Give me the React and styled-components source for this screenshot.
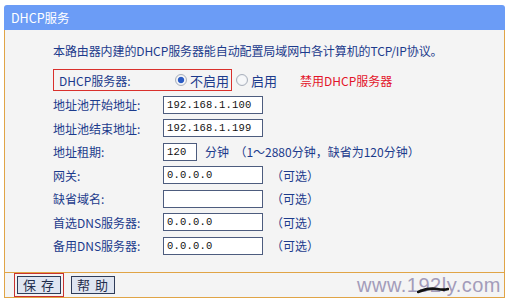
import React from 'react'
import styled, { createGlobalStyle } from 'styled-components'

const GlobalStyle = createGlobalStyle`
    body {
        margin: 0;
        background: #ffffff;
        font-family: "Noto Sans CJK SC", "Liberation Sans", sans-serif;
        font-size: 12px;
    }
`

const rows = [
    { label: '地址池开始地址:', value: '192.168.1.100' },
    { label: '地址池结束地址:', value: '192.168.1.199' },
    { label: '地址租期:', value: '120', small: true, note: '分钟  （1～2880分钟，缺省为120分钟）' },
    { label: '网关:', value: '0.0.0.0', note: '（可选）' },
    { label: '缺省域名:', value: '', note: '（可选）' },
    { label: '首选DNS服务器:', value: '0.0.0.0', note: '（可选）' },
    { label: '备用DNS服务器:', value: '0.0.0.0', note: '（可选）' },
]

const App = () => {
    return (
        <>
            <GlobalStyle />
            <Panel>
                <Header>DHCP服务</Header>
                <Body>
                    <Intro>本路由器内建的DHCP服务器能自动配置局域网中各计算机的TCP/IP协议。</Intro>
                    <SwitchRow>
                        <RedBox>
                            <Label $width={116}>DHCP服务器:</Label>
                            <Radio $checked />
                            <OptionText>不启用</OptionText>
                        </RedBox>
                        <Radio />
                        <OptionText>启用</OptionText>
                        <Warning>禁用DHCP服务器</Warning>
                    </SwitchRow>
                    {rows.map((row) => (
                        <Row key={row.label}>
                            <Label $width={110}>{row.label}</Label>
                            <Field $small={row.small}>{row.value}</Field>
                            {row.note && <Note>{row.note}</Note>}
                        </Row>
                    ))}
                </Body>
                <Footer>
                    <Focus>
                        <Button>保存</Button>
                    </Focus>
                    <Button>帮助</Button>
                    <Watermark>
                        www.192ly.com
                        <Scribble viewBox="0 0 32 8">
                            <path d="M1 6 C 8 3, 14 2, 20 3 S 28 4, 31 3" stroke="#111" strokeWidth="2.6" fill="none" strokeLinecap="round" />
                        </Scribble>
                    </Watermark>
                </Footer>
            </Panel>
        </>
    )
}

export default App

const Panel = styled.div`
    margin: 5px 0 0 4px;
    width: 501px;
`

const Header = styled.div`
    height: 25px;
    line-height: 25px;
    padding-left: 7px;
    background: #6b9cf6;
    color: #ffffff;
    font-size: 12.5px;
    border-radius: 3px 3px 0 0;
`

const Body = styled.div`
    background: #f4f4f4;
    border-left: 1px solid #e0a446;
    border-right: 1px solid #e0a446;
    padding: 12px 0 14px 48px;
    color: #1c3b8c;
`

const Intro = styled.div`
    line-height: 18px;
    margin-bottom: 9px;
    letter-spacing: -0.1px;
`

const SwitchRow = styled.div`
    display: flex;
    align-items: center;
    height: 22px;
    margin-bottom: 2px;
`

const RedBox = styled.div`
    display: flex;
    align-items: center;
    box-sizing: border-box;
    height: 22px;
    width: 179px;
    padding-left: 5px;
    border: 1px solid #d9302c;
`

const Label = styled.div`
    width: ${(p) => p.$width}px;
    flex-shrink: 0;
    white-space: nowrap;
`

const Radio = styled.span`
    box-sizing: border-box;
    width: 12px;
    height: 12px;
    border-radius: 50%;
    border: 1px solid #a9b0bc;
    background: radial-gradient(circle, ${(p) => (p.$checked ? '#2a5bc4 0 2.6px, #6f8fd4 3.2px,' : '')} #f6f7f9 3.6px, #d9dde4 100%);
    flex-shrink: 0;
    margin-left: ${(p) => (p.$checked ? '0' : '4px')};
`

const OptionText = styled.span`
    margin-left: 3px;
    font-size: 13px;
`

const Warning = styled.span`
    margin-left: 23px;
    color: #e3142a;
`

const Row = styled.div`
    display: flex;
    align-items: center;
    height: 23.5px;
`

const Field = styled.div`
    box-sizing: border-box;
    width: ${(p) => (p.$small ? 34 : 100)}px;
    height: 18px;
    line-height: 16px;
    padding-left: 3px;
    border: 1px solid #4d5c7e;
    background: #ffffff;
    color: #111;
    font-family: "Liberation Mono", monospace;
    font-size: 10.5px;
    letter-spacing: 0.2px;
`

const Note = styled.span`
    margin-left: 8px;
    white-space: pre;
`

const Footer = styled.div`
    position: relative;
    display: flex;
    align-items: center;
    height: 24px;
    padding-left: 9px;
    background: #f4f4f4;
    border: 1px solid #e0a446;
`

const Focus = styled.div`
    display: flex;
    padding: 2px;
    border: 1px solid #c8322f;
    margin-right: 7px;
`

const Button = styled.div`
    box-sizing: border-box;
    height: 18px;
    padding: 0 1px 0 5px;
    line-height: 16px;
    border: 1px solid #2e3b58;
    background: #dfe5f1;
    color: #1f2d4d;
    font-size: 13px;
    letter-spacing: 5px;
    white-space: nowrap;
`

const Watermark = styled.div`
    position: relative;
    margin-left: auto;
    margin-right: 3px;
    color: #a39cba;
    font-family: "Liberation Sans", Arial, sans-serif;
    font-size: 20px;
    line-height: 22px;
    letter-spacing: 0.5px;
`

const Scribble = styled.svg`
    position: absolute;
    left: 60px;
    top: 12px;
    width: 32px;
    height: 8px;
`
